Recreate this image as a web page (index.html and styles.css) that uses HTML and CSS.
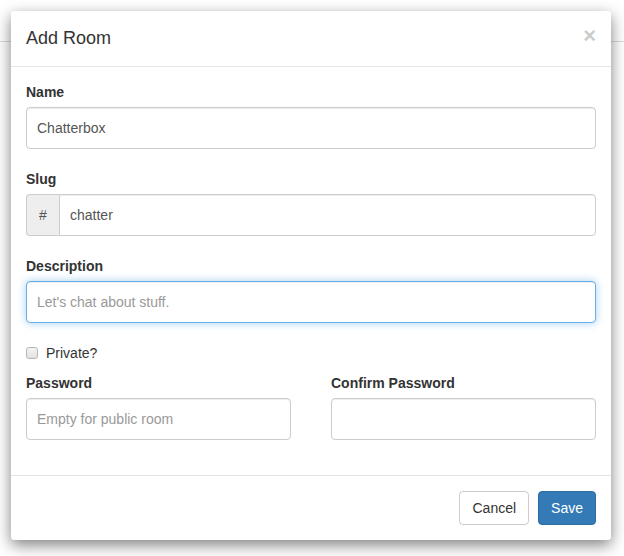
FILE: index.html
```html
<!DOCTYPE html>
<html lang="en">
<head>
<meta charset="utf-8">
<title>Add Room</title>
<link rel="stylesheet" href="styles.css">
</head>
<body>
<div class="navbar"></div>
<div class="modal">
  <div class="modal-header">
    <h4 class="modal-title">Add Room</h4>
    <button class="close" type="button" aria-label="Close">×</button>
  </div>
  <div class="modal-body">
    <div class="form-group">
      <label class="control-label">Name</label>
      <input class="form-control" type="text" value="Chatterbox">
    </div>
    <div class="form-group">
      <label class="control-label">Slug</label>
      <div class="input-group">
        <span class="addon">#</span>
        <input class="form-control grouped" type="text" value="chatter">
      </div>
    </div>
    <div class="form-group">
      <label class="control-label">Description</label>
      <input class="form-control focused" type="text" placeholder="Let's chat about stuff.">
    </div>
    <div class="checkbox">
      <input type="checkbox" id="private">
      <label for="private">Private?</label>
    </div>
    <div class="row">
      <div class="form-group">
        <label class="control-label">Password</label>
        <input class="form-control" type="password" placeholder="Empty for public room">
      </div>
      <div class="form-group">
        <label class="control-label">Confirm Password</label>
        <input class="form-control" type="password">
      </div>
    </div>
  </div>
  <div class="modal-footer">
    <button class="btn btn-default" type="button">Cancel</button>
    <button class="btn btn-primary" type="button">Save</button>
  </div>
</div>
</body>
</html>
```
FILE: styles.css
```css
* { box-sizing: border-box; }
html, body { margin: 0; padding: 0; background: #fff; }
body {
  font-family: "Liberation Sans", Arial, Helvetica, sans-serif;
  font-size: 14px;
  line-height: 20px;
  color: #333;
}
.navbar {
  height: 42px;
  border-bottom: 1px solid #dcdcdc;
}
.modal {
  position: absolute;
  left: 11px;
  top: 11px;
  width: 600px;
  background: #fff;
  border-radius: 3px;
  box-shadow: 0 5px 15px rgba(0, 0, 0, 0.5);
}
.modal-header {
  display: flex;
  justify-content: space-between;
  align-items: flex-start;
  padding: 15px;
  border-bottom: 1px solid #e5e5e5;
  height: 56px;
}
.modal-title {
  margin: 0;
  font-size: 18px;
  font-weight: 500;
  line-height: 25px;
  color: #333;
}
.close {
  border: 0;
  background: transparent;
  padding: 0;
  margin-top: -1px;
  font-family: "Liberation Sans", Arial, sans-serif;
  font-size: 22px;
  font-weight: bold;
  line-height: 1;
  color: #000;
  opacity: 0.2;
  cursor: pointer;
}
.modal-body {
  padding: 15px;
}
.form-group {
  margin-bottom: 20px;
}
.control-label {
  display: block;
  font-weight: bold;
  margin-bottom: 5px;
  line-height: 20px;
}
.form-control {
  display: block;
  width: 100%;
  height: 42px;
  padding: 10px 10px;
  font-family: inherit;
  font-size: 14px;
  line-height: 20px;
  color: #555;
  background: #fff;
  border: 1px solid #ccc;
  border-radius: 4px;
  box-shadow: inset 0 1px 1px rgba(0, 0, 0, 0.075);
  outline: none;
}
.form-control::placeholder { color: #999; opacity: 1; }
.form-control.focused {
  border-color: #66afe9;
  box-shadow: inset 0 1px 1px rgba(0, 0, 0, 0.075), 0 0 8px rgba(102, 175, 233, 0.6);
}
.input-group {
  display: flex;
}
.addon {
  width: 33px;
  height: 42px;
  flex: none;
  display: flex;
  align-items: center;
  justify-content: center;
  background: #eee;
  border: 1px solid #ccc;
  border-right: 0;
  border-radius: 4px 0 0 4px;
  color: #555;
  font-size: 14px;
}
.form-control.grouped {
  border-radius: 0 4px 4px 0;
  flex: 1;
}
.checkbox {
  display: flex;
  align-items: center;
  height: 20px;
  margin-bottom: 10px;
}
.checkbox input {
  appearance: none;
  -webkit-appearance: none;
  margin: 0 8px 0 0;
  width: 12px;
  height: 12px;
  border: 1px solid #b5b5b5;
  border-radius: 3px;
  background: linear-gradient(#f4f4f4, #e2e2e2);
}
.checkbox label {
  font-weight: normal;
}
.row {
  display: grid;
  grid-template-columns: 1fr 1fr;
  column-gap: 40px;
}
.modal-footer {
  display: flex;
  justify-content: flex-end;
  gap: 9px;
  padding: 15px;
  border-top: 1px solid #e5e5e5;
}
.btn {
  height: 34px;
  padding: 6px 12px;
  font-family: inherit;
  font-size: 14px;
  line-height: 20px;
  border: 1px solid transparent;
  border-radius: 4px;
  cursor: pointer;
}
.btn-default {
  background: #fff;
  border-color: #ccc;
  color: #333;
}
.btn-primary {
  background: #337ab7;
  border-color: #2e6da4;
  color: #fff;
}
```
